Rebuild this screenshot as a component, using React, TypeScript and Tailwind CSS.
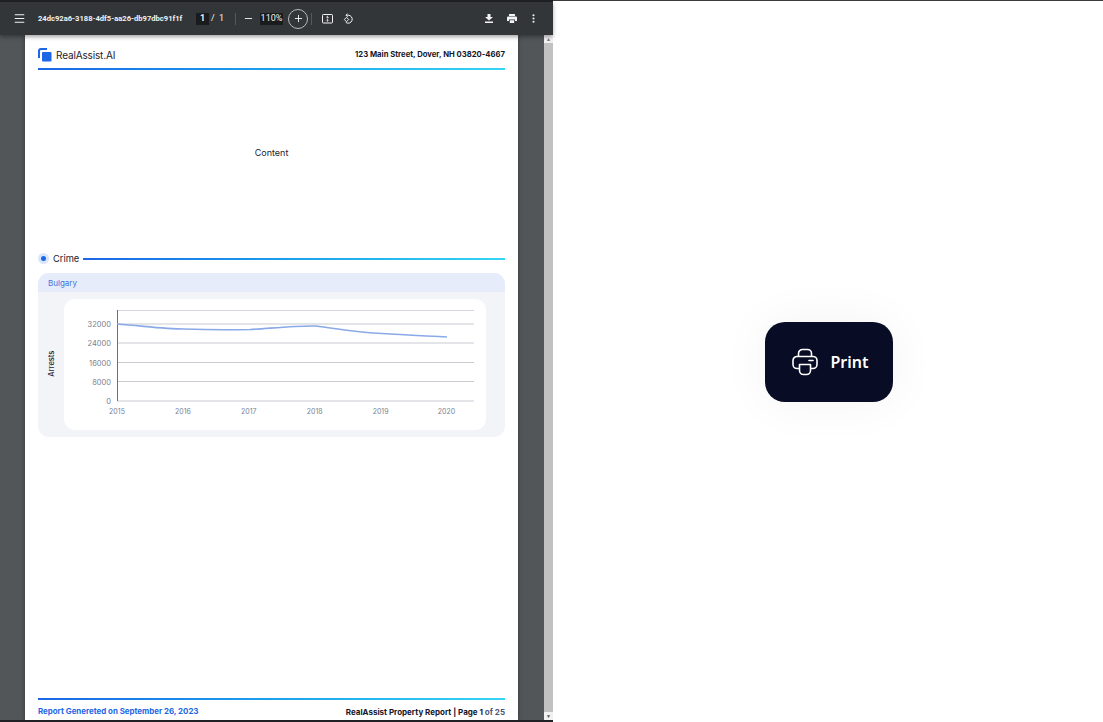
import React from 'react';
import { Menu, Minus, Plus, MoreVertical } from 'lucide-react';

const years = ['2015', '2016', '2017', '2018', '2019', '2020'];
const ticks = ['32000', '24000', '16000', '8000', '0'];

// coordinates are relative to the white chart panel
const Chart = () => (
  <svg width="422" height="131" viewBox="0 0 422 131" className="block" fontFamily="Inter, sans-serif">
    <line x1="53" x2="410" y1="11.5" y2="11.5" stroke="#d5d7e0" />
    {[25, 44, 63.5, 82.5, 102].map((y) => (
      <line key={y} x1="53" x2="410" y1={y} y2={y} stroke="#c9cbd3" />
    ))}
    <line x1="53.5" x2="53.5" y1="11" y2="102" stroke="#6b6f78" />
    {ticks.map((t, i) => (
      <text key={t} x="47" y={[28, 47, 66.5, 86, 105][i]} textAnchor="end" fontSize="7.5" fill="#7b8092">
        {t}
      </text>
    ))}
    {years.map((y, i) => (
      <text key={y} x={53 + i * 65.9} y="115" textAnchor="middle" fontSize="7" fill="#7b8092">
        {y}
      </text>
    ))}
    <path
      d="M53 25 C 80 27, 100 30, 120 30 C 145 31, 165 31, 186 30.5 C 210 29, 235 26.5, 252 27 C 275 30, 295 34, 318 34.5 C 340 36, 365 37, 383 38"
      fill="none"
      stroke="#8aa9e8"
      strokeWidth="1.6"
    />
  </svg>
);

const Logo = () => (
  <svg width="14" height="14" viewBox="0 0 14 14" fill="none">
    <path d="M1 10V3a2 2 0 0 1 2-2h6" stroke="#1d66e5" strokeWidth="2" />
    <rect x="4" y="4" width="9.5" height="9.5" rx="1" fill="#1d66e5" />
  </svg>
);

const Divider = () => <span className="w-px h-[12px] bg-[#55595c]" />;

const Toolbar = () => (
  <div className="h-[33px] bg-[#323639] flex items-center text-[#f1f3f4] font-['Roboto',sans-serif] shadow-[0_2px_4px_rgba(0,0,0,0.35)] relative">
    <div className="w-[38px] flex justify-center">
      <Menu size={13} strokeWidth={2} />
    </div>
    <span className="w-[158px] text-[7.6px] font-bold whitespace-nowrap">
      24dc92a6-3188-4df5-aa26-db97dbc91f1f
    </span>
    <span className="w-[13px] h-[12px] bg-[#191b1c] text-[9px] font-bold flex items-center justify-center">1</span>
    <span className="text-[9px] ml-[2px] w-[3px]">/</span>
    <span className="text-[9px] ml-[5px] w-[16px]">1</span>
    <Divider />
    <Minus size={11} strokeWidth={2} className="ml-[7px]" />
    <span className="ml-[6px] w-[23px] h-[12px] bg-[#191b1c] text-[9px] flex items-center justify-center">110%</span>
    <span className="ml-[5px] w-[20px] h-[20px] rounded-full border border-[#b8bbbd] flex items-center justify-center">
      <Plus size={11} strokeWidth={2} />
    </span>
    <span className="ml-[3px] flex items-center">
      <Divider />
    </span>
    <svg width="11" height="10" viewBox="0 0 11 10" fill="none" stroke="#f1f3f4" className="ml-[10px]">
      <rect x="0.5" y="0.5" width="10" height="8.5" rx="0.8" />
      <path d="M5.5 1.8v2M4.3 3l1.2 1.2L6.7 3M5.5 7.7v-2M4.3 6.5l1.2-1.2 1.2 1.2" strokeWidth="0.8" />
    </svg>
    <svg width="10" height="11" viewBox="0 0 10 11" fill="none" stroke="#f1f3f4" strokeWidth="1" className="ml-[10px]">
      <path d="M3 2.2h2.2a4 4 0 1 1-2.4 7.2" />
      <path d="M4.6 0.6 3 2.2l1.6 1.6" />
      <path d="M3.5 4.3 5.7 6.5 3.5 8.7 1.3 6.5z" />
    </svg>
    <span className="flex-1" />
    <svg width="8" height="9" viewBox="0 0 8 9" fill="#f1f3f4">
      <path d="M2.5 0h3v3H8L4 6.6 0 3h2.5zM0 7.6h8V9H0z" />
    </svg>
    <svg width="10" height="9" viewBox="0 0 10 9" fill="#f1f3f4" className="ml-[14px]">
      <path d="M2 0h6v2H2zM1 2.6h8a1 1 0 0 1 1 1V7H8V5.4H2V7H0V3.6a1 1 0 0 1 1-1zM2.8 6.2h4.4V9H2.8z" />
    </svg>
    <MoreVertical size={11} strokeWidth={2.6} className="ml-[11px] mr-[14px]" />
  </div>
);

const Report = () => (
  <div className="w-[493px] h-full bg-white px-[13px] flex flex-col font-['Inter',sans-serif] overflow-hidden shadow-[0_0_4px_rgba(0,0,0,0.4)]">
    <div className="h-[33px] flex items-center justify-between pt-[7px]">
      <div className="flex items-center gap-[4px]">
        <Logo />
        <span className="text-[10px] text-[#20222c] tracking-[-0.15px]">RealAssist.AI</span>
      </div>
      <span className="text-[7.7px] font-bold text-[#14162a]">123 Main Street, Dover, NH 03820-4667</span>
    </div>
    <div className="h-[2px] bg-gradient-to-r from-[#1d66e5] to-[#35d6f2]" />

    <div className="h-[165px] flex items-center justify-center text-[9px] text-[#20222c]">Content</div>

    <div className="h-[32px] flex items-center gap-[4px] pt-[15px]">
      <span className="w-[11px] h-[11px] rounded-full bg-[#dbe6fb] flex items-center justify-center">
        <span className="w-[5px] h-[5px] rounded-full bg-[#1d66e5]" />
      </span>
      <span className="text-[9.3px] text-[#20222c]">Crime</span>
      <span className="flex-1 h-[2px] bg-gradient-to-r from-[#1d66e5] to-[#35d6f2]" />
    </div>

    <div className="mt-[6px] h-[164px] rounded-[11px] bg-[#f2f4f7] overflow-hidden">
      <div className="h-[19px] bg-[#e6ecfa] flex items-center px-[10px] text-[8px] text-[#3f73dc]">Bulgary</div>
      <div className="relative ml-[26px] mr-[19px] mt-[7px] h-[131px] rounded-[11px] bg-white">
        <Chart />
        <span className="absolute left-[-42px] top-[59px] w-[60px] text-center -rotate-90 text-[7.5px] font-medium text-[#1f2230]">
          Arrests
        </span>
      </div>
    </div>

    <div className="flex-1" />
    <div className="h-[2px] bg-gradient-to-r from-[#1d66e5] to-[#35d6f2]" />
    <div className="h-[20px] pt-[4px] flex items-center justify-between font-bold">
      <span className="text-[7.9px] text-[#1d66e5]">Report Genereted on September 26, 2023</span>
      <span className="text-[8px] text-[#14162a]">
        RealAssist Property Report | Page 1 <span className="text-[#4d5578]">of 25</span>
      </span>
    </div>
  </div>
);

export default function App() {
  return (
    <div className="w-[1103px] h-[722px] flex overflow-hidden bg-white">
      <div className="w-[553px] h-full flex flex-col bg-[#202124]">
        <div className="h-[2px] bg-[#202124]" />
        <Toolbar />
        <div className="flex-1 flex min-h-0 bg-[#525659]">
          <div className="flex-1 pl-[25px] min-w-0">
            <Report />
          </div>
          <div className="w-[9px] flex flex-col bg-[#f1f1f1] items-center">
            <span className="h-[8px] text-[5px] leading-[8px] text-[#7a7a7a]">▲</span>
            <span className="w-full flex-1 bg-[#c1c1c1]" />
            <span className="h-[8px] text-[5px] leading-[8px] text-[#505050]">▼</span>
          </div>
        </div>
        <div className="h-[2px] bg-[#202124]" />
      </div>
      <div className="flex-1 h-full flex flex-col">
        <div className="h-[1px] bg-[#3a3a3a]" />
        <div className="flex-1 flex items-center justify-center pl-[2px]">
          <button className="w-[128px] h-[80px] rounded-[20px] bg-[#080c24] flex items-center justify-center gap-[12px] pl-[3px] text-white font-['Noto_Sans',sans-serif] font-semibold text-[16px] shadow-[0_0_50px_rgba(8,12,36,0.05)]">
            <svg width="26" height="28" viewBox="0 0 26 28" fill="none" stroke="white" strokeWidth="1.6" strokeLinejoin="round">
              <path d="M6.5 9V5.5a4 4 0 0 1 4-4h5a4 4 0 0 1 4 4V9" />
              <path d="M7.5 20.5H5a4 4 0 0 1-4-4V12.5a4 4 0 0 1 4-4h16a4 4 0 0 1 4 4v4a4 4 0 0 1-4 4h-2.5" />
              <path d="M7.5 16.5h11v6a4 4 0 0 1-4 4h-3a4 4 0 0 1-4-4z" />
              <path d="M17 12.5h4" strokeLinecap="round" />
            </svg>
            <span className="pt-[1px]">Print</span>
          </button>
        </div>
      </div>
    </div>
  );
}
